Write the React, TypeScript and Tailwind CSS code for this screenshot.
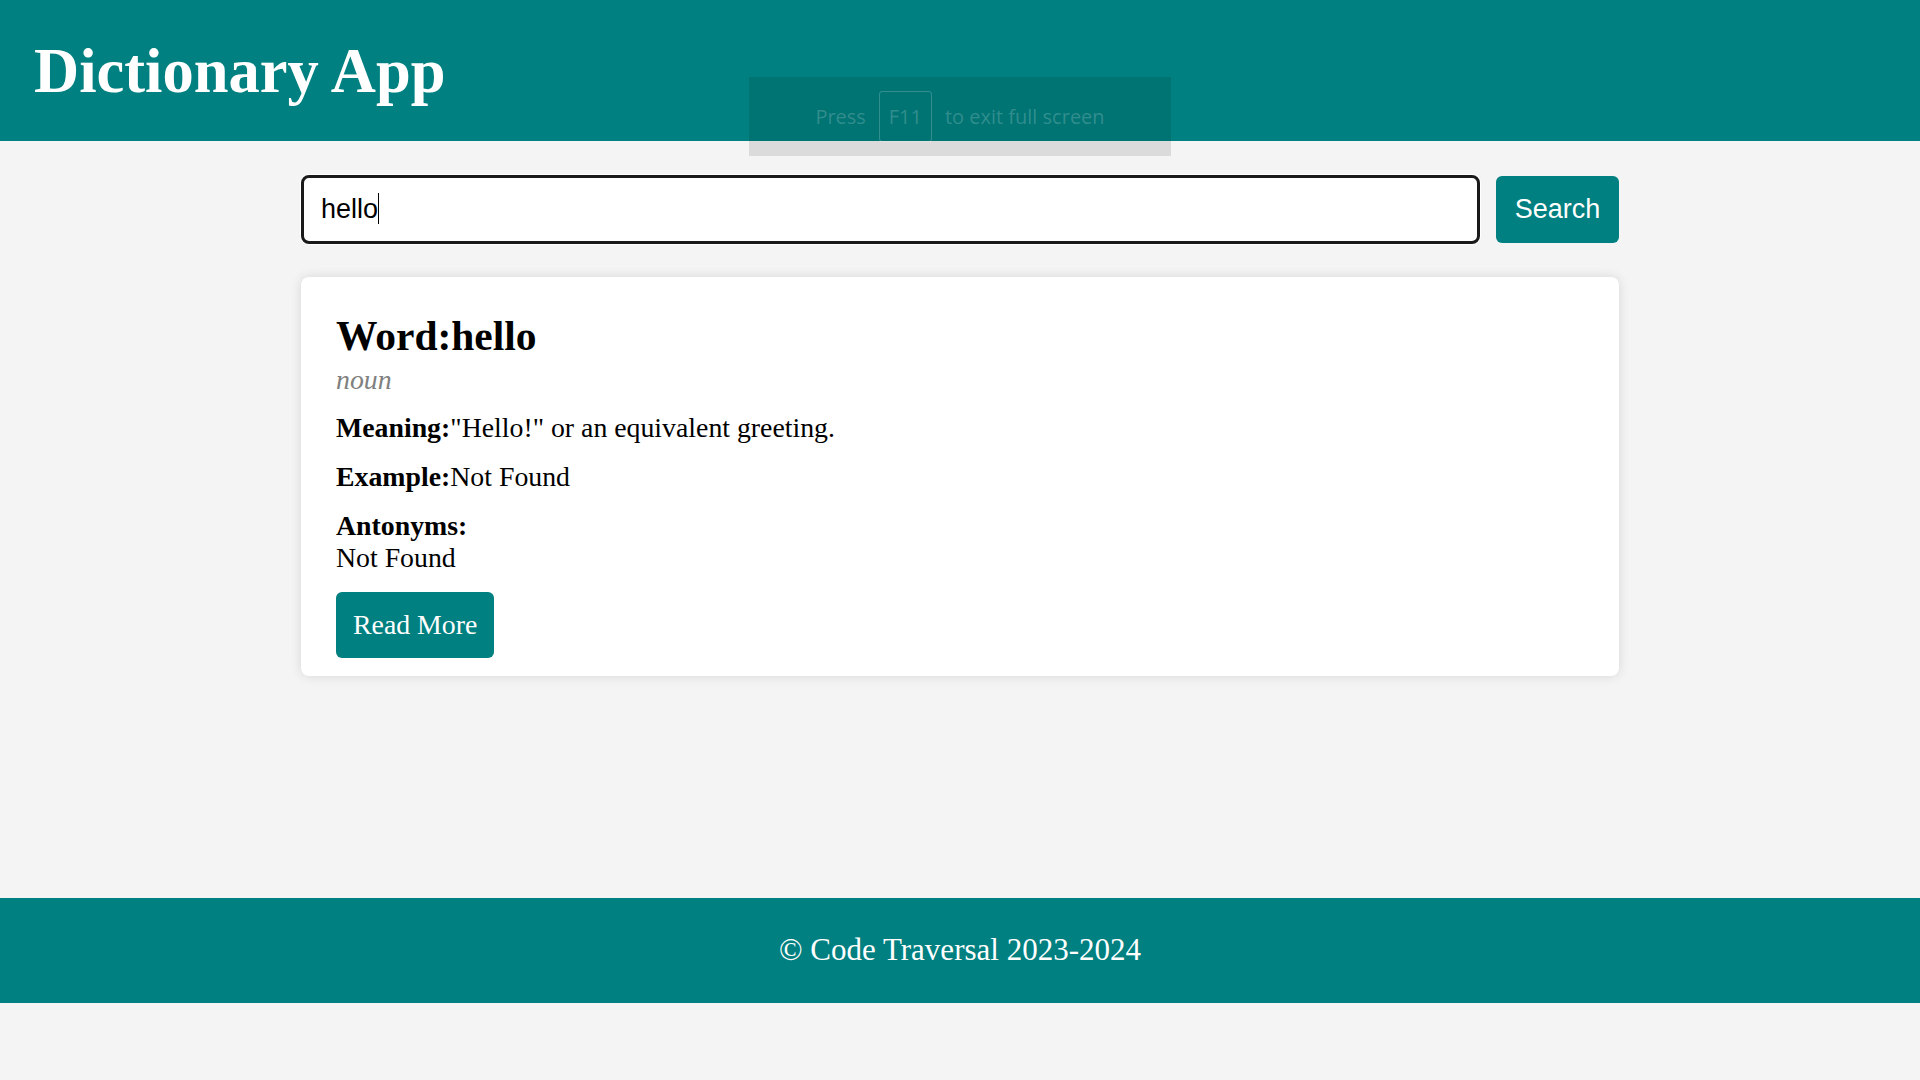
import { useState } from "react";

const entry = {
  word: "hello",
  partOfSpeech: "noun",
  meaning: "\"Hello!\" or an equivalent greeting.",
  example: "Not Found",
  antonyms: "Not Found",
};

function FullScreenHint() {
  return (
    <div className="absolute left-1/2 top-[77px] -translate-x-1/2 w-[422px] h-[79px] bg-black/10 flex items-center justify-center gap-[13px] font-['Open_Sans','Noto_Sans',sans-serif] text-[20px] text-white/20">
      <span>Press</span>
      <span className="w-[53px] h-[51px] flex items-center justify-center border border-white/20 rounded-[3px]">
        F11
      </span>
      <span>to exit full screen</span>
    </div>
  );
}

export default function App() {
  const [query, setQuery] = useState("hello");

  return (
    <div className="relative min-h-screen bg-[#f4f4f4] font-['Liberation_Serif','Times_New_Roman',serif] text-black">
      <header className="h-[141px] bg-[#008080] px-[34px] flex items-center">
        <h1 className="text-[62.5px] leading-[71px] font-bold text-white pt-[2px]">Dictionary App</h1>
      </header>

      <FullScreenHint />

      <main className="h-[757px] pt-[34px]">
        <div className="w-[1318px] mx-auto">
          <div className="flex items-center gap-[16px]">
            <div className="relative w-[1179px]">
              <input
                value={query}
                onChange={(e) => setQuery(e.target.value)}
                className="w-full h-[69px] border-[3px] border-[#1a1a1a] rounded-[8px] bg-white pl-[17px] pr-4 text-[27px] font-['Liberation_Sans',Arial,sans-serif] outline-none shadow-[0_0_0_1px_#ffffff]"
              />
              <span className="absolute left-[77px] top-[18px] w-px h-[31px] bg-black" />
            </div>
            <button className="w-[123px] h-[67px] bg-[#008080] rounded-[6px] text-white text-[27px] font-['Liberation_Sans',Arial,sans-serif]">
              Search
            </button>
          </div>

          <div className="mt-[33px] bg-white rounded-[8px] shadow-[0_0_12px_rgba(0,0,0,0.12)] px-[35px] pt-[36px] pb-[18px] text-[27.8px] leading-[32px]">
            <h2 className="text-[41.5px] leading-[47px] font-bold">Word:{entry.word}</h2>
            <p className="mt-[4px] italic text-[#808080]">{entry.partOfSpeech}</p>
            <p className="mt-[16px]">
              <span className="font-bold">Meaning:</span>
              {entry.meaning}
            </p>
            <p className="mt-[17px]">
              <span className="font-bold">Example:</span>
              {entry.example}
            </p>
            <div className="mt-[17px]">
              <p className="font-bold">Antonyms:</p>
              <p>{entry.antonyms}</p>
            </div>
            <button className="mt-[18px] h-[66px] px-[17px] bg-[#008080] rounded-[6px] text-white text-[27.8px]">
              Read More
            </button>
          </div>
        </div>
      </main>

      <footer className="h-[105px] bg-[#008080] flex items-center justify-center">
        <p className="text-white text-[31px]">© Code Traversal 2023-2024</p>
      </footer>
    </div>
  );
}
